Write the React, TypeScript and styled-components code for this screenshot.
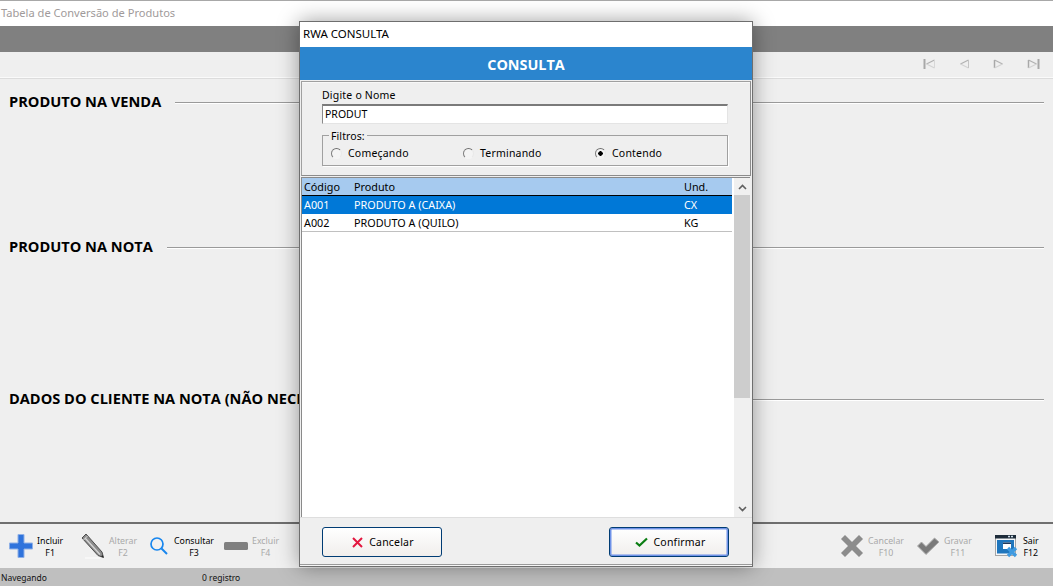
import React from "react";
import styled, { createGlobalStyle } from "styled-components";

const Global = createGlobalStyle`
  html, body { margin: 0; padding: 0; height: 100%; overflow: hidden; background: #efefef; }
  body { font-family: "Noto Sans", "DejaVu Sans", sans-serif; }
  #root { height: 100%; }
  * { box-sizing: border-box; }
`;

const Page = styled.div`
  position: relative;
  width: 1053px;
  height: 586px;
  display: flex;
  flex-direction: column;
  background: #efefef;
  overflow: hidden;
`;
const WindowTitle = styled.div`
  height: 26px;
  flex: none;
  background: #fff;
  border-top: 1px solid #a8a8a8;
  padding: 0 0 2px 1px;
  display: flex;
  align-items: center;
  font-size: 11.1px;
  color: #a09a9a;
`;
const GrayBand = styled.div`
  height: 26px;
  flex: none;
  background: #808080;
`;
const NavRow = styled.div`
  height: 26px;
  flex: none;
  display: flex;
  justify-content: flex-end;
  align-items: center;
  gap: 23px;
  padding: 0 13px 1px 0;
  border-bottom: 1px solid #fafafa;
  background: #efefef;
  box-shadow: 0 1px 0 #dcdcdc;
`;
const Content = styled.div`
  flex: 1;
  display: flex;
  flex-direction: column;
  border-bottom: 2px solid #6f6f6f;
`;
const Section = styled.div<{ $h: number }>`
  height: ${(p) => p.$h}px;
  flex: none;
  padding: 14px 9px 0 9px;
  display: flex;
  align-items: flex-start;
  gap: 14px;
`;
const SectionTitle = styled.h2`
  margin: 0;
  font-family: "Open Sans", sans-serif;
  font-size: 14.6px;
  line-height: 18px;
  font-weight: 700;
  color: #000;
  white-space: nowrap;
`;
const SectionRule = styled.div`
  flex: 1;
  height: 1px;
  margin-top: 10px;
  background: #9a9a9a;
  box-shadow: 0 1px 0 #fff;
`;
const Toolbar = styled.div`
  height: 44px;
  flex: none;
  display: flex;
  align-items: center;
  background: #f0f0f0;
  padding: 0 3px 0 8px;
`;
const ToolGroup = styled.div`
  display: flex;
  align-items: center;
`;
const Spacer = styled.div`
  flex: 1;
`;
const Tool = styled.div<{ $w: number; $gap: number }>`
  width: ${(p) => p.$w}px;
  display: flex;
  align-items: center;
  gap: ${(p) => p.$gap}px;
`;
const ToolText = styled.div<{ $off?: boolean }>`
  font-size: 8.8px;
  line-height: 12px;
  padding-top: 1px;
  text-align: center;
  color: ${(p) => (p.$off ? "#a9a9a9" : "#000")};
`;
const StatusBar = styled.div`
  height: 18px;
  flex: none;
  background: #bfbfbf;
  display: flex;
  align-items: center;
  font-size: 8.5px;
  color: #111;
  padding: 1px 0 0 1px;
`;
const StatusCell = styled.div`
  width: 201px;
`;

const Modal = styled.div`
  position: absolute;
  left: 299px;
  top: 21px;
  width: 454px;
  height: 546px;
  background: #efefef;
  border: 1px solid #6e6e6e;
  box-shadow: 0 0 20px rgba(0, 0, 0, 0.38);
  display: flex;
  flex-direction: column;
`;
const ModalTitle = styled.div`
  height: 25px;
  flex: none;
  background: #fff;
  display: flex;
  align-items: center;
  padding: 0 0 2px 3px;
  font-size: 11.5px;
  color: #000;
`;
const ModalHeader = styled.div`
  height: 33px;
  flex: none;
  background: #2b85ce;
  color: #fff;
  font-family: "Open Sans", sans-serif;
  font-size: 14.4px;
  font-weight: 700;
  padding-top: 2px;
  display: flex;
  align-items: center;
  justify-content: center;
`;
const SearchPanel = styled.div`
  height: 95px;
  flex: none;
  margin: 1px 1px 1px 1px;
  border: 1px solid #a0a0a0;
  border-right-color: #8c8c8c;
  border-bottom-color: #8c8c8c;
  box-shadow: inset 0 1px 0 #f8f8f8;
  padding: 6px 0 0 20px;
  display: flex;
  flex-direction: column;
`;
const FieldLabel = styled.label`
  font-size: 10.5px;
  line-height: 15px;
  color: #000;
  letter-spacing: 0.2px;
`;
const SearchInput = styled.div`
  width: 406px;
  height: 20px;
  margin-top: 1px;
  background: #fff;
  border-top: 2px solid #7a7a7a;
  border-left: 1px solid #8a8a8a;
  border-right: 1px solid #e4e4e4;
  border-bottom: 1px solid #e4e4e4;
  padding-left: 2px;
  font-size: 10.5px;
  line-height: 16px;
  color: #000;
`;
const FilterBox = styled.div`
  width: 406px;
  height: 31px;
  margin-top: 11px;
  padding: 5px 0 0 8px;
  border: 1px solid #a0a0a0;
  box-shadow: 1px 1px 0 #fff;
  display: flex;
  align-items: center;
  position: relative;
`;
const FilterLegend = styled.span`
  position: absolute;
  left: 6px;
  top: -6px;
  font-size: 10.5px;
  line-height: 12px;
  padding: 0 2px;
  background: #efefef;
  letter-spacing: 0.1px;
  color: #000;
`;
const RadioRow = styled.div`
  display: grid;
  grid-template-columns: 132px 132px 1fr;
  width: 100%;
`;
const RadioItem = styled.div`
  display: flex;
  align-items: center;
  gap: 6px;
  font-size: 10.5px;
  letter-spacing: 0.2px;
  color: #000;
`;
const RadioDot = styled.span<{ $on?: boolean }>`
  width: 11px;
  height: 11px;
  flex: none;
  border-radius: 50%;
  background: ${(p) =>
    p.$on ? "radial-gradient(circle, #000 0 2px, #f4f4f4 2.5px)" : "#f4f4f4"};
  border: 1px solid;
  border-color: #6e6e6e #e8e8e8 #f4f4f4 #7e7e7e;
`;
const ListArea = styled.div`
  height: 340px;
  flex: none;
  margin: 0 2px 0 1px;
  display: flex;
  background: #fff;
  border-left: 1px solid #8a8a8a;
  border-top: 1px solid #8a8a8a;
`;
const ListBody = styled.div`
  flex: 1;
  display: flex;
  flex-direction: column;
  min-width: 0;
`;
const Row = styled.div<{ $kind?: "head" | "sel" | "item" }>`
  height: 18px;
  flex: none;
  display: grid;
  grid-template-columns: 50px 330px 1fr;
  align-items: center;
  padding-left: 2px;
  font-size: 10.8px;
  background: ${(p) =>
    p.$kind === "head" ? "#a6caef" : p.$kind === "sel" ? "#0078d7" : "#fff"};
  color: ${(p) => (p.$kind === "sel" ? "#fff" : "#000")};
  border-bottom: 1px solid
    ${(p) =>
      p.$kind === "head" ? "#000" : p.$kind === "sel" ? "#0078d7" : "#c0c0c0"};
`;
const ScrollBar = styled.div`
  width: 16px;
  flex: none;
  margin-left: 2px;
  background: #f0f0f0;
  display: flex;
  flex-direction: column;
  color: #606060;
`;
const ScrollBtn = styled.div`
  height: 17px;
  flex: none;
  display: flex;
  align-items: center;
  justify-content: center;
`;
const ScrollThumb = styled.div`
  height: 203px;
  flex: none;
  background: #cdcdcd;
`;
const ScrollRest = styled.div`
  flex: 1;
`;
const ModalFooter = styled.div`
  flex: 1;
  border-top: 1px solid #dedede;
  display: flex;
  justify-content: space-between;
  align-items: flex-start;
  padding: 9px 23px 0 22px;
  box-shadow: inset 0 -1px 0 #f6f6f6, inset 0 -2px 0 #9a9a9a;
`;
const Button = styled.button<{ $primary?: boolean }>`
  width: 120px;
  height: 30px;
  padding: 0 0 0 2px;
  display: flex;
  align-items: center;
  justify-content: center;
  gap: 6px;
  border: 1px solid #003c74;
  border-radius: 3px;
  background: linear-gradient(#ffffff, #f1eeec);
  box-shadow: ${(p) => (p.$primary ? "inset 0 0 0 1.5px #6f92e8" : "none")};
  font-family: "Noto Sans", sans-serif;
  font-size: 10.5px;
  letter-spacing: 0.2px;
  color: #000;
`;

function Incluir() {
  return (
    <svg width="26" height="26" viewBox="0 0 26 26">
      <path d="M10 1.500h6v8.500h8.500v6H16v8.500h-6V16H1.500v-6H10z" fill="#2f73dc" stroke="#8fb0e6" strokeWidth="1" />
    </svg>
  );
}
function Pencil() {
  return (
    <svg width="26" height="26" viewBox="0 0 26 26">
      <path d="M2 5l4-4 16 18 1.500 5.500L18 22.500z" fill="#8c8c8c" stroke="#4d4d4d" strokeWidth="1" />
      <path d="M5 5l15 16.500" stroke="#d6d6d6" strokeWidth="1.300" />
      <path d="M3.500 7L5 5.500 7.500 3" stroke="#d6d6d6" strokeWidth="1" />
      <path d="M21 23.500l2.500 1-1-2.500z" fill="#222" />
      <path d="M5 25h15" stroke="#fafafa" strokeWidth="1.500" />
    </svg>
  );
}
function Lens() {
  return (
    <svg width="20" height="20" viewBox="0 0 20 20" fill="none" stroke="#1786ee" strokeWidth="1.700">
      <circle cx="8" cy="8" r="6" />
      <path d="M12.500 12.500l5.500 5.500" strokeWidth="2" />
    </svg>
  );
}
function Minus() {
  return (
    <svg width="26" height="10" viewBox="0 0 26 10">
      <rect x="1" y="1" width="24" height="8" rx="1.500" fill="#808080" />
    </svg>
  );
}
function BigX() {
  return (
    <svg width="24" height="24" viewBox="0 0 24 24">
      <path d="M5 1l7 7 7-7 4 4-7 7 7 7-4 4-7-7-7 7-4-4 7-7-7-7z" fill="#8c8c8c" stroke="#bcbcbc" strokeWidth="1" />
    </svg>
  );
}
function BigCheck() {
  return (
    <svg width="24" height="20" viewBox="0 0 24 20">
      <path d="M1.500 10l4-4 4.500 4.500L18.500 2 23 6 10 18.500z" fill="#7a7a7a" stroke="#b0b0b0" strokeWidth="1" />
    </svg>
  );
}
function Exit() {
  return (
    <svg width="24" height="24" viewBox="0 0 24 24">
      <rect x="1.500" y="1.500" width="20" height="20" fill="#f4f6f8" stroke="#a5a5a5" />
      <rect x="1" y="1" width="21" height="3.500" fill="#1d2c3a" />
      <rect x="14" y="1.800" width="2" height="1.500" fill="#cfe0ee" />
      <rect x="17" y="1.800" width="2" height="1.500" fill="#cfe0ee" />
      <rect x="3" y="6" width="17" height="13.500" fill="#1f76bd" />
      <rect x="9" y="8.500" width="8" height="6.500" fill="#fff" />
      <rect x="9" y="8.500" width="8" height="1.500" fill="#21395a" />
      <path d="M14 14l8 8M22 14l-8 8" stroke="#3f9ae0" strokeWidth="3.200" />
    </svg>
  );
}
function First() {
  return (
    <svg width="13" height="10" viewBox="0 0 13 10" fill="none">
      <path d="M1.500 0v10" stroke="#a8a8a8" strokeWidth="2" />
      <path d="M11.500 1L3.500 5" stroke="#b0b0b0" strokeWidth="1.200" />
      <path d="M3.500 5l8 4" stroke="#d2d2d2" strokeWidth="1.200" />
      <path d="M11.500 1v8" stroke="#d8d8d8" />
    </svg>
  );
}
function Prev() {
  return (
    <svg width="11" height="10" viewBox="0 0 11 10" fill="none">
      <path d="M9.500 1L1.500 5" stroke="#b0b0b0" strokeWidth="1.200" />
      <path d="M1.500 5l8 4" stroke="#d2d2d2" strokeWidth="1.200" />
      <path d="M9.500 1v8" stroke="#c4c4c4" />
    </svg>
  );
}
function Next() {
  return (
    <svg width="11" height="10" viewBox="0 0 11 10" fill="none">
      <path d="M1.500 9V1" stroke="#a8a8a8" strokeWidth="1.500" />
      <path d="M1.500 1l8 4" stroke="#b0b0b0" strokeWidth="1.200" />
      <path d="M9.500 5l-8 4" stroke="#d2d2d2" strokeWidth="1.200" />
    </svg>
  );
}
function Last() {
  return (
    <svg width="13" height="10" viewBox="0 0 13 10" fill="none">
      <path d="M1.500 9V1" stroke="#a8a8a8" strokeWidth="1.500" />
      <path d="M1.500 1l8 4" stroke="#b0b0b0" strokeWidth="1.200" />
      <path d="M9.500 5l-8 4" stroke="#d2d2d2" strokeWidth="1.200" />
      <path d="M11.500 0v10" stroke="#a8a8a8" strokeWidth="2" />
    </svg>
  );
}
function Up() {
  return (
    <svg width="9" height="6" viewBox="0 0 9 6" fill="none" stroke="currentColor" strokeWidth="1.600">
      <path d="M1 5l3.500-3.500L8 5" />
    </svg>
  );
}
function Down() {
  return (
    <svg width="9" height="6" viewBox="0 0 9 6" fill="none" stroke="currentColor" strokeWidth="1.600">
      <path d="M1 1l3.500 3.500L8 1" />
    </svg>
  );
}
function SmallX() {
  return (
    <svg width="11" height="11" viewBox="0 0 11 11" fill="none" stroke="#e3163f" strokeWidth="2">
      <path d="M1 1l9 9M10 1l-9 9" />
    </svg>
  );
}
function SmallCheck() {
  return (
    <svg width="13" height="10" viewBox="0 0 13 10" fill="none" stroke="#0a7d12" strokeWidth="2.200">
      <path d="M1 5.500l3.500 3L12 1.500" />
    </svg>
  );
}

export default function App() {
  return (
    <Page>
      <Global />
      <WindowTitle>Tabela de Conversão de Produtos</WindowTitle>
      <GrayBand />
      <NavRow>
        <First />
        <Prev />
        <Next />
        <Last />
      </NavRow>
      <Content>
        <Section $h={145}>
          <SectionTitle>PRODUTO NA VENDA</SectionTitle>
          <SectionRule />
        </Section>
        <Section $h={152}>
          <SectionTitle>PRODUTO NA NOTA</SectionTitle>
          <SectionRule />
        </Section>
        <Section $h={140}>
          <SectionTitle>DADOS DO CLIENTE NA NOTA (NÃO NECESSÁRIO)</SectionTitle>
          <SectionRule />
        </Section>
      </Content>
      <Toolbar>
        <ToolGroup>
          <Tool $w={72} $gap={3}>
            <Incluir />
            <ToolText>Incluir<br />F1</ToolText>
          </Tool>
          <Tool $w={69} $gap={3}>
            <Pencil />
            <ToolText $off>Alterar<br />F2</ToolText>
          </Tool>
          <Tool $w={74} $gap={5}>
            <Lens />
            <ToolText>Consultar<br />F3</ToolText>
          </Tool>
          <Tool $w={70} $gap={3}>
            <Minus />
            <ToolText $off>Excluir<br />F4</ToolText>
          </Tool>
        </ToolGroup>
        <Spacer />
        <ToolGroup>
          <Tool $w={76} $gap={4}>
            <BigX />
            <ToolText $off>Cancelar<br />F10</ToolText>
          </Tool>
          <Tool $w={78} $gap={4}>
            <BigCheck />
            <ToolText $off>Gravar<br />F11</ToolText>
          </Tool>
          <Tool $w={56} $gap={5}>
            <Exit />
            <ToolText>Sair<br />F12</ToolText>
          </Tool>
        </ToolGroup>
      </Toolbar>
      <StatusBar>
        <StatusCell>Navegando</StatusCell>
        <div>0 registro</div>
      </StatusBar>
      <Modal>
        <ModalTitle>RWA CONSULTA</ModalTitle>
        <ModalHeader>CONSULTA</ModalHeader>
        <SearchPanel>
          <FieldLabel>Digite o Nome</FieldLabel>
          <SearchInput>PRODUT</SearchInput>
          <FilterBox>
            <FilterLegend>Filtros:</FilterLegend>
            <RadioRow>
              <RadioItem><RadioDot />Começando</RadioItem>
              <RadioItem><RadioDot />Terminando</RadioItem>
              <RadioItem><RadioDot $on />Contendo</RadioItem>
            </RadioRow>
          </FilterBox>
        </SearchPanel>
        <ListArea>
          <ListBody>
            <Row $kind="head"><span>Código</span><span>Produto</span><span>Und.</span></Row>
            <Row $kind="sel"><span>A001</span><span>PRODUTO A (CAIXA)</span><span>CX</span></Row>
            <Row><span>A002</span><span>PRODUTO A (QUILO)</span><span>KG</span></Row>
          </ListBody>
          <ScrollBar>
            <ScrollBtn><Up /></ScrollBtn>
            <ScrollThumb />
            <ScrollRest />
            <ScrollBtn><Down /></ScrollBtn>
          </ScrollBar>
        </ListArea>
        <ModalFooter>
          <Button><SmallX />Cancelar</Button>
          <Button $primary><SmallCheck />Confirmar</Button>
        </ModalFooter>
      </Modal>
    </Page>
  );
}
